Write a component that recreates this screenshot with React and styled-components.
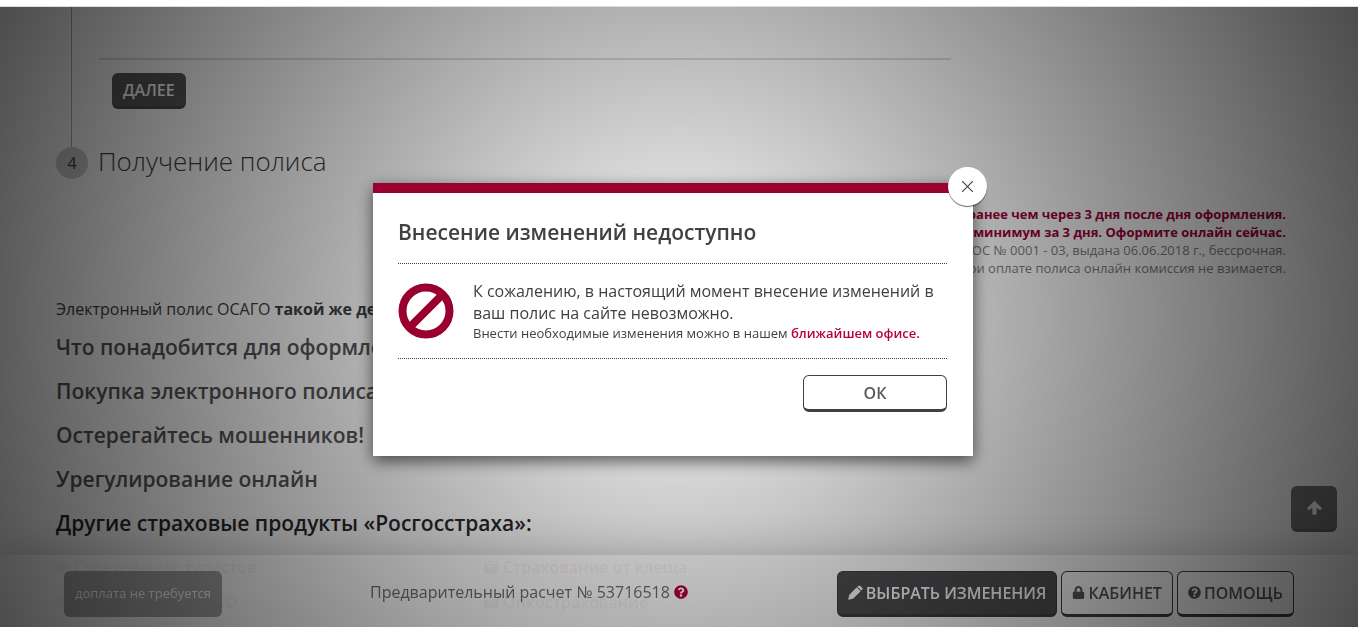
import React, { useState } from "react";
import styled, { createGlobalStyle, css } from "styled-components";
import { FaLock, FaQuestionCircle, FaCameraRetro, FaPlane } from "react-icons/fa";

const GlobalStyle = createGlobalStyle`
  * {
    box-sizing: border-box;
  }

  body {
    margin: 0;
    overflow: hidden;
    background: #fff;
    color: #414042;
    font-family: "Open Sans", "Noto Sans", sans-serif;
    font-size: 16px;
    line-height: 22px;
  }

  h2, h3, p, ul {
    margin: 0;
    padding: 0;
    font-weight: 400;
  }

  button {
    font-family: inherit;
  }
`;

const Page = styled.div`
  min-height: 100vh;
  padding-top: 6px;
`;

const Content = styled.main`
  padding: 0 56px;
  border-top: 1px solid #ddd;
`;

const StepBody = styled.section`
  height: 140px;
  margin-left: 15px;
  padding-left: 27px;
  border-left: 1px solid #b0b0b0;
`;

const StepLine = styled.div`
  max-width: 852px;
  padding-top: 51px;
  border-bottom: 2px solid #dedede;
`;

const buttonFace = css`
  border: 1px solid #414042;
  border-bottom-width: 3px;
  border-radius: 6px;
  font-size: 16px;
  cursor: pointer;
`;

const NextButton = styled.button`
  ${buttonFace}
  height: 36px;
  margin: 13px 0 0 13px;
  padding: 0 10px;
  background: #58595b;
  border-color: #58595b;
  border-bottom-color: #4c4d4f;
  color: #fff;
  font-weight: 600;
`;

const StepHead = styled.div`
  display: flex;
  gap: 10px;
  height: 32px;
`;

const StepNumber = styled.span`
  width: 32px;
  height: 32px;
  border-radius: 50%;
  background: #cfcfcf;
  line-height: 32px;
  text-align: center;
`;

const StepTitle = styled.h2`
  font-size: 26px;
  font-weight: 300;
  line-height: 28px;
`;

const Notice = styled.div`
  margin: 26px 16px 21px 0;
  text-align: right;
  font-size: 13px;
  line-height: 18px;
  color: #808082;
`;

const NoticeStrong = styled.p`
  color: #a0003a;
  font-weight: 700;
`;

const Lead = styled.p`
  font-size: 16px;
`;

const SectionTitle = styled.h3`
  margin-top: ${props => (props.$first ? "12px" : "14px")};
  font-size: 21px;
  font-weight: 600;
  line-height: 30px;
  color: ${props => (props.$dark ? "#2a2a2c" : "#555658")};
`;

const Products = styled.ul`
  display: grid;
  grid-template-columns: 428px 1fr;
  row-gap: 13px;
  margin-top: 18px;
  list-style: none;
  font-weight: 600;
  color: #a0003a;
`;

const Product = styled.li`
  display: flex;
  align-items: center;
  gap: 5px;
`;

const BottomBar = styled.footer`
  position: fixed;
  left: 0;
  right: 0;
  bottom: 0;
  display: flex;
  align-items: center;
  height: 72px;
  padding: 5px 64px 0;
  background: rgba(255, 255, 255, 0.95);
  box-shadow: 0 0 40px rgba(0, 0, 0, 0.2);
`;

const PayStatus = styled.div`
  width: 158px;
  height: 46px;
  border-radius: 6px;
  background: #a6a7a9;
  color: #fff;
  font-size: 13px;
  line-height: 44px;
  text-align: center;
`;

const Calculation = styled.div`
  display: flex;
  align-items: center;
  gap: 4px;
  margin-left: 148px;
  padding-bottom: 4px;
  color: #6e6f71;

  svg {
    color: #b8003c;
    font-size: 14px;
  }
`;

const BarActions = styled.div`
  display: flex;
  gap: 4px;
  margin-left: auto;
`;

const BarButton = styled.button`
  ${buttonFace}
  display: flex;
  align-items: center;
  gap: 3px;
  height: 46px;
  padding: 0 10px;
  background: ${props => (props.$filled ? "#4e4f51" : "transparent")};
  color: ${props => (props.$filled ? "#fff" : "#58595b")};
  font-weight: 600;

  svg {
    font-size: 13px;
  }
`;

const ToTop = styled.button`
  ${buttonFace}
  position: fixed;
  right: 21px;
  bottom: 95px;
  display: flex;
  align-items: center;
  justify-content: center;
  width: 46px;
  height: 46px;
  background: #77787a;
  border-color: #77787a;
  border-bottom-color: #6a6b6d;
  color: #fff;
`;

const Overlay = styled.div`
  position: fixed;
  inset: 7px 0 0;
  background: radial-gradient(
    circle farthest-corner at center,
    rgba(0, 0, 0, 0.02) 0%,
    rgba(0, 0, 0, 0.7) 100%
  );
`;

const Dialog = styled.section`
  position: fixed;
  top: 183px;
  left: 50%;
  width: 600px;
  margin-left: -306px;
  padding: 24px 26px 44px 25px;
  border-top: 10px solid #99002f;
  background: #fff;
  box-shadow: 0 5px 15px rgba(0, 0, 0, 0.6);
`;

const DialogTitle = styled.h2`
  padding-bottom: 16px;
  border-bottom: 1px dotted #414042;
  color: #414042;
  font-size: 21px;
  font-weight: 600;
  line-height: 30px;
`;

const DialogBody = styled.div`
  display: flex;
  align-items: center;
  gap: 19px;
  padding: 16px 0;
  border-bottom: 1px dotted #414042;
`;

const DialogNote = styled.p`
  font-size: 13px;
  line-height: 18px;
`;

const OfficeLink = styled.a`
  color: #b8003c;
  font-weight: 600;
  text-decoration: none;
`;

const OkButton = styled.button`
  ${buttonFace}
  display: block;
  width: 144px;
  height: 37px;
  margin: 16px 0 0 auto;
  background: #fff;
  color: #58595b;
  font-weight: 600;
`;

const CloseButton = styled.button`
  position: absolute;
  top: -26px;
  right: -14px;
  display: flex;
  align-items: center;
  justify-content: center;
  width: 39px;
  height: 39px;
  padding: 0;
  border: 0;
  border-radius: 50%;
  background: #fff;
  box-shadow: 0 1px 1px rgba(0, 0, 0, 0.6);
  cursor: pointer;
`;

const sections = [
  "Что понадобится для оформления",
  "Покупка электронного полиса",
  "Остерегайтесь мошенников!",
  "Урегулирование онлайн",
];

function ForbiddenIcon() {
  return (
    <svg width="56" height="56" viewBox="0 0 56 56" fill="none" aria-hidden="true">
      <circle cx="28" cy="28" r="23.5" stroke="#99002f" strokeWidth="8" />
      <path d="M12 44 44 12" stroke="#99002f" strokeWidth="8" />
    </svg>
  );
}

function CloseIcon() {
  return (
    <svg width="11" height="11" viewBox="0 0 11 11" aria-hidden="true">
      <path d="M0 0 11 11M11 0 0 11" stroke="#414042" strokeWidth="1.1" />
    </svg>
  );
}

function PencilIcon() {
  return (
    <svg width="15" height="15" viewBox="0 0 15 15" fill="currentColor" aria-hidden="true">
      <path d="M10.2.9a1.4 1.4 0 0 1 2 0l1.9 1.9a1.4 1.4 0 0 1 0 2l-.8.8-3.9-3.9zM8.8 2.3l3.9 3.9-7.4 7.4-4.3 1.1a.6.6 0 0 1-.7-.7l1.1-4.3z" />
    </svg>
  );
}

function ArrowUpIcon() {
  return (
    <svg width="15" height="14" viewBox="0 0 15 14" fill="currentColor" aria-hidden="true">
      <path d="M6.8.4a1 1 0 0 1 1.4 0l6.3 6.3a.9.9 0 0 1 0 1.3l-.8.8a.9.9 0 0 1-1.3 0L9.6 6.8V13a.7.7 0 0 1-.7.7H6.1a.7.7 0 0 1-.7-.7V6.8L2.6 8.8a.9.9 0 0 1-1.3 0L.5 8a.9.9 0 0 1 0-1.3z" />
    </svg>
  );
}

function UnavailableDialog({ onClose }) {
  return (
    <>
      <Overlay />
      <Dialog role="dialog" aria-labelledby="dialog-title">
        <DialogTitle id="dialog-title">Внесение изменений недоступно</DialogTitle>
        <DialogBody>
          <ForbiddenIcon />
          <div>
            <p>
              К сожалению, в настоящий момент внесение изменений в
              <br />
              ваш полис на сайте невозможно.
            </p>
            <DialogNote>
              Внести необходимые изменения можно в нашем{" "}
              <OfficeLink href="#office">ближайшем офисе.</OfficeLink>
            </DialogNote>
          </div>
        </DialogBody>
        <OkButton type="button" onClick={onClose}>
          ОК
        </OkButton>
        <CloseButton type="button" aria-label="Закрыть" onClick={onClose}>
          <CloseIcon />
        </CloseButton>
      </Dialog>
    </>
  );
}

function App() {
  const [dialogVisible, setDialogVisible] = useState(true);

  return (
    <>
      <GlobalStyle />
      <Page>
        <Content>
          <StepBody>
            <StepLine />
            <NextButton type="button">ДАЛЕЕ</NextButton>
          </StepBody>
          <StepHead>
            <StepNumber>4</StepNumber>
            <StepTitle>Получение полиса</StepTitle>
          </StepHead>
          <Notice>
            <NoticeStrong>ранее чем через 3 дня после дня оформления.</NoticeStrong>
            <NoticeStrong>минимум за 3 дня. Оформите онлайн сейчас.</NoticeStrong>
            <p>ОС № 0001 - 03, выдана 06.06.2018 г., бессрочная.</p>
            <p>При оплате полиса онлайн комиссия не взимается.</p>
          </Notice>
          <Lead>
            Электронный полис ОСАГО <strong>такой же де</strong>
          </Lead>
          {sections.map((title, index) => (
            <SectionTitle key={title} $first={index === 0}>
              {title}
            </SectionTitle>
          ))}
          <SectionTitle $dark>Другие страховые продукты «Росгосстраха»:</SectionTitle>
          <Products>
            <Product>
              <FaPlane size={13} />
              Страхование туристов
            </Product>
            <Product>
              <FaCameraRetro size={14} />
              Страхование от клеща
            </Product>
            <Product>
              <FaPlane size={13} />
              Страхование КАСКО
            </Product>
            <Product>
              <FaCameraRetro size={14} />
              Онкострахование
            </Product>
          </Products>
        </Content>
      </Page>
      <ToTop type="button" aria-label="Наверх">
        <ArrowUpIcon />
      </ToTop>
      <BottomBar>
        <PayStatus>доплата не требуется</PayStatus>
        <Calculation>
          Предварительный расчет № 53716518
          <FaQuestionCircle />
        </Calculation>
        <BarActions>
          <BarButton type="button" $filled>
            <PencilIcon />
            ВЫБРАТЬ ИЗМЕНЕНИЯ
          </BarButton>
          <BarButton type="button">
            <FaLock />
            КАБИНЕТ
          </BarButton>
          <BarButton type="button">
            <FaQuestionCircle />
            ПОМОЩЬ
          </BarButton>
        </BarActions>
      </BottomBar>
      {dialogVisible && <UnavailableDialog onClose={() => setDialogVisible(false)} />}
    </>
  );
}

export default App;
